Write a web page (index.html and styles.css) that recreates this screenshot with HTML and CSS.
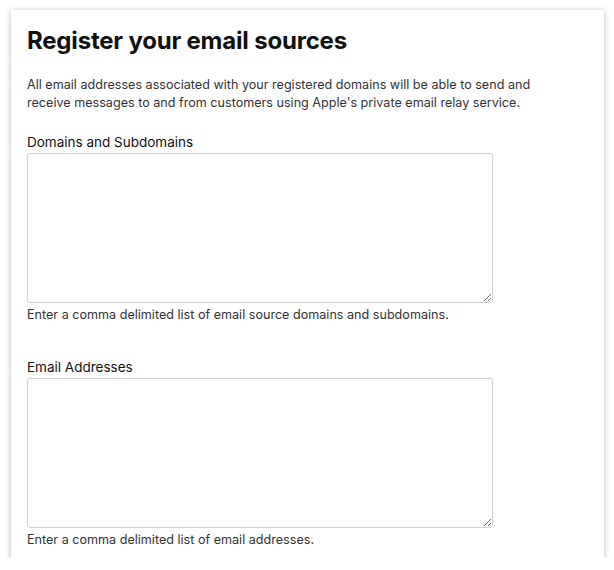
FILE: index.html
```html
<!DOCTYPE html>
<html>
<head>
<meta charset="utf-8">
<link rel="stylesheet" href="styles.css">
</head>
<body>
<div class="card">
  <h1 class="title">Register your email sources</h1>
  <p class="intro">All email addresses associated with your registered domains will be able to send and receive messages to and from customers using Apple's private email relay service.</p>
  <div class="field">
    <label class="label">Domains and Subdomains</label>
    <textarea class="input"></textarea>
    <div class="help">Enter a comma delimited list of email source domains and subdomains.</div>
  </div>
  <div class="field field-second">
    <label class="label">Email Addresses</label>
    <textarea class="input"></textarea>
    <div class="help">Enter a comma delimited list of email addresses.</div>
  </div>
</div>
</body>
</html>
```
FILE: styles.css
```css
html, body {
  margin: 0;
  padding: 0;
  background: #ffffff;
}
body {
  font-family: Inter, "Liberation Sans", sans-serif;
  color: #1d1d1f;
}
.card {
  box-sizing: border-box;
  margin: 10px 0 0 11px;
  width: 593px;
  height: 548px;
  background: #fff;
  box-shadow: 0 1px 6px rgba(0,0,0,0.28);
  padding: 16px 16px 0 16px;
}
.title {
  margin: 0;
  font-size: 24px;
  line-height: 30px;
  font-weight: 700;
  color: #111;
  letter-spacing: -0.2px;
}
.intro {
  margin: 20px 0 0 0;
  font-size: 12.6px;
  line-height: 18px;
  color: #333;
  width: 540px;
}
.field {
  margin-top: 21px;
  display: flex;
  flex-direction: column;
  align-items: flex-start;
}
.field-second {
  margin-top: 34px;
}
.label {
  font-size: 13.5px;
  line-height: 18px;
  color: #111;
}
.input {
  box-sizing: border-box;
  width: 466px;
  height: 150px;
  margin: 2px 0 0 0;
  border: 1px solid #cfcfcf;
  border-radius: 3px;
  resize: vertical;
  font-family: inherit;
}
.help {
  margin-top: 3px;
  font-size: 12.6px;
  line-height: 18px;
  color: #333;
}
```
